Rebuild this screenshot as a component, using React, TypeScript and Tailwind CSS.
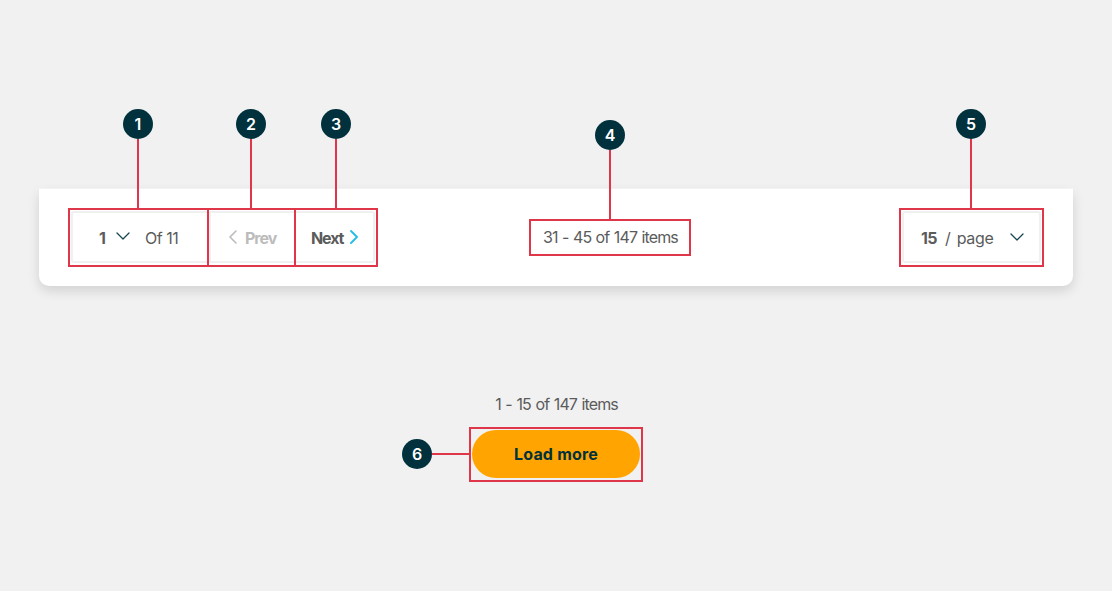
import type { ReactNode } from "react";

function Badge({ n }: { n: number }) {
  return (
    <span className="flex size-[30px] shrink-0 items-center justify-center rounded-full bg-[#00313c] pb-px text-[16px] leading-none font-semibold text-white">
      {n}
    </span>
  );
}

function Callout({ n, className }: { n: number; className: string }) {
  return (
    <div className={`absolute flex flex-col items-center ${className}`}>
      <Badge n={n} />
      <span className="w-[2px] grow bg-[#e0364a]" />
    </div>
  );
}

function Marked({ className, children }: { className: string; children: ReactNode }) {
  return <div className={`relative flex border-2 border-[#e0364a] ${className}`}>{children}</div>;
}

function Chevron({ d, className, width = 1.3 }: { d: string; className: string; width?: number }) {
  return (
    <svg viewBox="0 0 14 14" className={`size-[14px] shrink-0 ${className}`} fill="none" stroke="currentColor" strokeWidth={width} strokeLinecap="round" strokeLinejoin="round">
      <path d={d} />
    </svg>
  );
}

const DOWN = "M1 4 L7 10 L13 4";
const LEFT = "M10 1 L4 7 L10 13";
const RIGHT = "M4 1 L10 7 L4 13";

export default function App() {
  return (
    <main className="flex h-[591px] w-[1112px] flex-col overflow-hidden bg-[#f1f1f1] pt-[189px] font-['Inter',sans-serif] text-[16px] leading-[20px] whitespace-nowrap text-[#5b5b5b]">
      <section className="mx-[39px] flex h-[97px] shrink-0 items-start rounded-b-[10px] bg-white px-[29px] shadow-[0_5px_12px_rgba(0,0,0,0.13),0_-1px_0_#f7f7f7]">
        <div className="mt-[19px] flex">
          <Marked className="h-[59px] w-[141px] pt-[1px] pl-[1px]">
            <Callout n={1} className="-top-[101px] left-[53px] h-[99px]" />
            <div className="flex h-[52px] w-full items-center rounded-l-[3px] border-2 border-r-0 border-[#f0f0f0] pt-px pl-[26px]">
              <span className="w-[17px] font-bold">1</span>
              <Chevron d={DOWN} className="-mt-[4px] text-[#184552]" />
              <span className="ml-[15px] tracking-[-0.5px]">Of 11</span>
            </div>
          </Marked>
          <Marked className="-ml-[2px] h-[59px] w-[89px] pt-[1px]">
            <Callout n={2} className="-top-[101px] left-[27px] h-[99px]" />
            <div className="flex h-[52px] w-full items-center border-y-2 border-l-2 border-[#f0f0f0] pt-px pl-[15px] font-bold text-[#bcbcbc]">
              <Chevron d={LEFT} className="-mt-[2px]" width={1.6} />
              <span className="ml-[5px] tracking-[-1px]">Prev</span>
            </div>
          </Marked>
          <Marked className="-ml-[2px] h-[59px] w-[84px] pt-[1px] pr-[1px]">
            <Callout n={3} className="-top-[101px] left-[25px] h-[99px]" />
            <div className="flex h-[52px] w-full items-center rounded-r-[3px] border-2 border-l-0 border-[#f0f0f0] pt-px pl-[15px] font-bold">
              <span className="w-[33px] tracking-[-1.1px]">Next</span>
              <Chevron d={RIGHT} className="-mt-[2px] ml-[3px] text-[#22bce8]" width={1.8} />
            </div>
          </Marked>
        </div>
        <Marked className="mt-[30px] ml-[151px] h-[37px] w-[162px] items-center justify-center">
          <Callout n={4} className="-top-[101px] left-[64px] h-[99px]" />
          <span className="-mt-px ml-px tracking-[-0.85px] [word-spacing:0.7px]">31 - 45 of 147 items</span>
        </Marked>
        <Marked className="mt-[19px] ml-auto h-[59px] w-[145px] px-[1px] pt-[1px]">
          <Callout n={5} className="-top-[101px] left-[55px] h-[99px]" />
          <div className="flex h-[52px] w-full items-center rounded-[3px] border-2 border-[#f0f0f0] pt-px pl-[17px]">
            <span className="w-[24px] font-bold tracking-[-0.7px]">15</span>
            <span className="tracking-[-0.3px] [word-spacing:2px]">/ page</span>
            <Chevron d={DOWN} className="-mt-[2px] ml-[16px] text-[#184552]" />
          </div>
        </Marked>
      </section>
      <section className="mt-[109px] flex flex-col items-center">
        <p className="-mt-px ml-px tracking-[-0.9px] [word-spacing:1px]">1 - 15 of 147 items</p>
        <Marked className="mt-[13px] h-[55px] w-[174px] items-center justify-center">
          <div className="absolute top-[10px] -left-[69px] flex w-[67px] items-center">
            <Badge n={6} />
            <span className="h-[2px] grow bg-[#e0364a]" />
          </div>
          <button className="mb-[1px] h-[48px] w-[168px] rounded-full bg-[#ffa400] font-bold tracking-[0.2px] text-[#00313c]">Load more</button>
        </Marked>
      </section>
    </main>
  );
}
